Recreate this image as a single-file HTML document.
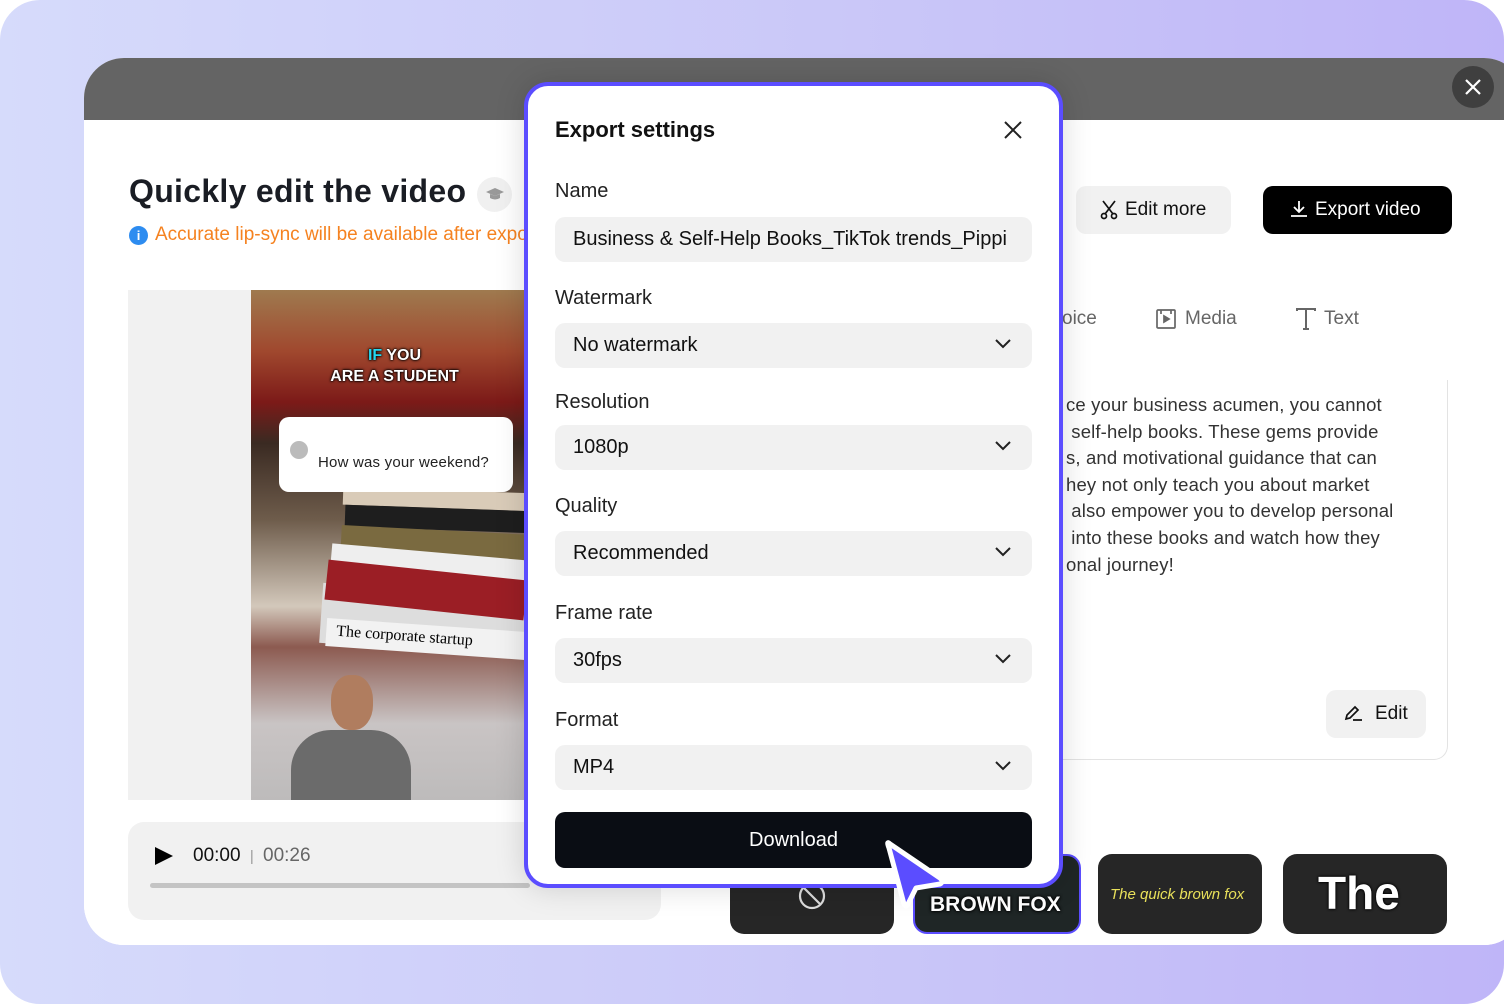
<!DOCTYPE html>
<html><head><meta charset="utf-8"><style>
*{box-sizing:border-box;margin:0;padding:0}
body{width:1504px;height:1004px;background:#fff;font-family:"Liberation Sans",sans-serif;overflow:hidden;position:relative}
.bg{position:absolute;inset:0;border-radius:40px;background:linear-gradient(90deg,#d6dbfb,#c9c6f8 60%,#bfb5f8)}
.win{position:absolute;left:84px;top:58px;width:1440px;height:887px;border-radius:40px;overflow:hidden;background:#fff}
.hdr{position:absolute;left:0;top:0;right:0;height:62px;background:#646464}
.body{position:absolute;left:0;top:62px;right:0;bottom:0;background:#fff;border-radius:20px 20px 0 0}
.abs{position:absolute}
.sel{position:absolute;left:30px;width:477px;height:45px;background:#f1f1f1;border-radius:10px;font-size:20px;color:#111;padding:0 18px;line-height:45px;white-space:nowrap;overflow:hidden}
.sel svg{position:absolute;right:20px;top:15px}
.lbl{position:absolute;left:30px;font-size:20px;color:#222}
.tile{position:absolute;top:854px;height:80px;width:164px;background:#262626;border-radius:14px}
</style></head><body>
<div class="bg"></div>
<div class="win">
 <div class="hdr"></div>
 <div class="body"></div>
</div>
<div class="abs" style="left:1452px;top:66px;width:42px;height:42px;border-radius:50%;background:#3f3f3f"></div>
<svg class="abs" style="left:1463px;top:77px" width="20" height="20"><path d="M3 3L17 17M17 3L3 17" stroke="#fff" stroke-width="2.2"/></svg>

<div class="abs" style="left:129px;top:173px;font-size:32px;font-weight:bold;color:#1a1d24;letter-spacing:0.3px">Quickly edit the video</div>
<div class="abs" style="left:477px;top:177px;width:35px;height:35px;border-radius:50%;background:#f0f0f0"></div>
<svg class="abs" style="left:485px;top:186px" width="20" height="16"><path d="M1 6L10 2L19 6L10 10Z" fill="#999"/><path d="M5 8v4q5 3 10 0V8l-5 2z" fill="#999"/></svg>
<div class="abs" style="left:129px;top:226px;width:19px;height:19px;border-radius:50%;background:#2d8cf0;color:#fff;font-size:13px;font-weight:bold;text-align:center;line-height:19px">i</div>
<div class="abs" style="left:155px;top:224px;font-size:19px;color:#f58220;white-space:nowrap;width:370px;overflow:hidden">Accurate lip-sync will be available after export</div>

<div class="abs" style="left:128px;top:290px;width:400px;height:510px;background:#f1f1f1"></div>
<div class="abs" style="left:251px;top:290px;width:277px;height:510px;overflow:hidden;background:linear-gradient(180deg,#9f7a4f 0%,#a0482e 12%,#7c1a18 22%,#3a2a22 30%,#6e5c4b 45%,#d3c8bb 62%,#8c5a50 70%,#c9c4c4 85%,#bdbbbb 100%)">
 <div class="abs" style="left:92px;top:200px;width:190px;height:18px;background:#d9cbb8;transform:rotate(2deg)"></div>
 <div class="abs" style="left:94px;top:218px;width:190px;height:22px;background:#1e1e1e;transform:rotate(2deg)"></div>
 <div class="abs" style="left:90px;top:240px;width:190px;height:28px;background:#7a6a40;transform:rotate(3deg)"></div>
 <div class="abs" style="left:80px;top:262px;width:200px;height:22px;background:#eee;transform:rotate(5deg)"></div>
 <div class="abs" style="left:70px;top:300px;width:207px;height:60px;background:#ddd;transform:rotate(4deg)"></div>
 <div class="abs" style="left:75px;top:280px;width:200px;height:40px;background:#9b1e25;transform:rotate(6deg)"></div>
 <div class="abs" style="left:75px;top:335px;width:200px;height:28px;background:#f2f2f2;font-size:16px;font-family:'Liberation Serif',serif;padding:4px 10px;transform:rotate(4deg)">The corporate startup</div>
 <div class="abs" style="left:40px;top:440px;width:120px;height:75px;background:#6b6b6b;border-radius:40px 40px 0 0"></div>
 <div class="abs" style="left:80px;top:385px;width:42px;height:55px;background:#b07d5f;border-radius:45%"></div>
 <div class="abs" style="left:5px;top:55px;width:277px;text-align:center;color:#fff;font-weight:bold;font-size:16px;line-height:21px;text-shadow:0 0 3px #000,0 0 2px #000,0 0 1px #000"><span style="color:#25d8f0">IF</span> YOU<br>ARE A STUDENT</div>
</div>
<div class="abs" style="left:279px;top:417px;width:234px;height:75px;background:#fff;border-radius:10px"></div>
<div class="abs" style="left:290px;top:441px;width:18px;height:18px;border-radius:50%;background:#bbb"></div>
<div class="abs" style="left:318px;top:454px;font-size:15px;color:#222;letter-spacing:0.2px">How was your weekend?</div>

<div class="abs" style="left:128px;top:822px;width:533px;height:98px;background:#f1f1f1;border-radius:16px"></div>
<svg class="abs" style="left:154px;top:846px" width="20" height="20"><path d="M1 1L19 10L1 19Z" fill="#000"/></svg>
<div class="abs" style="left:193px;top:845px;font-size:19px;color:#111">00:00 <span style="color:#999;font-size:15px;margin:0 4px">|</span> <span style="color:#666">00:26</span></div>
<div class="abs" style="left:150px;top:883px;width:380px;height:5px;background:#c4c4c4;border-radius:3px"></div>

<div class="abs" style="left:1076px;top:186px;width:155px;height:48px;background:#f1f1f1;border-radius:10px;font-size:19px;color:#111;line-height:48px;padding-left:49px">Edit more</div>
<svg class="abs" style="left:1100px;top:200px" width="18" height="20" fill="none" stroke="#111" stroke-width="1.7"><path d="M3 1L13 14M15 1L5 14"/><circle cx="4" cy="16" r="2.5"/><circle cx="14" cy="16" r="2.5"/></svg>
<div class="abs" style="left:1263px;top:186px;width:189px;height:48px;background:#000;border-radius:10px;font-size:19px;color:#fff;line-height:48px;padding-left:52px">Export video</div>
<svg class="abs" style="left:1290px;top:200px" width="18" height="18" fill="none" stroke="#fff" stroke-width="1.8"><path d="M9 1V12M4 7L9 12L14 7M1 16H17"/></svg>
<div class="abs" style="left:1062px;top:308px;font-size:19px;color:#666">oice</div>
<svg class="abs" style="left:1156px;top:309px" width="20" height="20" fill="none" stroke="#666" stroke-width="1.7"><rect x="1" y="1" width="18" height="18" rx="1"/><path d="M8 7v6l5-3z" fill="#666"/><path d="M5 1v4M15 1v4"/></svg>
<div class="abs" style="left:1185px;top:308px;font-size:19px;color:#666">Media</div>
<svg class="abs" style="left:1295px;top:308px" width="22" height="22" fill="none" stroke="#666" stroke-width="2"><path d="M2 3V1H20V3M11 1V21M8 21H14"/></svg>
<div class="abs" style="left:1324px;top:308px;font-size:19px;color:#666">Text</div>
<div class="abs" style="left:1040px;top:380px;width:408px;height:380px;border:1px solid #e3e3e3;border-top:none;border-radius:0 0 14px 14px"></div>
<div class="abs" style="left:1066px;top:392px;font-size:18.5px;line-height:26.6px;color:#333;white-space:nowrap;letter-spacing:0.15px">ce your business acumen, you cannot<br>&nbsp;self-help books. These gems provide<br>s, and motivational guidance that can<br>hey not only teach you about market<br>&nbsp;also empower you to develop personal<br>&nbsp;into these books and watch how they<br>onal journey!</div>
<div class="abs" style="left:1326px;top:690px;width:100px;height:48px;background:#f1f1f1;border-radius:10px;font-size:19px;color:#111;line-height:48px;padding-left:49px">Edit</div>
<svg class="abs" style="left:1344px;top:704px" width="20" height="18" fill="none" stroke="#111" stroke-width="1.7"><path d="M2 15L3 11L11 3L14 6L6 14Z M9 16H18"/></svg>

<div class="tile" style="left:730px"></div>
<svg class="abs" style="left:798px;top:882px" width="28" height="28" fill="none" stroke="#ddd" stroke-width="2.2"><circle cx="14" cy="14" r="12"/><path d="M6 6L22 22"/></svg>
<div class="tile" style="left:913px;width:168px;border:2px solid #5b4dff;background:#1f2626"></div>
<div class="abs" style="left:930px;top:893px;font-size:21px;font-weight:bold;color:#fff;text-shadow:0 0 3px #000,0 0 3px #000">BROWN FOX</div>
<div class="tile" style="left:1098px"></div>
<div class="abs" style="left:1110px;top:886px;font-size:15px;font-style:italic;color:#e8e05a">The quick brown fox</div>
<div class="tile" style="left:1283px"></div>
<div class="abs" style="left:1318px;top:866px;font-size:46px;font-weight:bold;color:#fff;text-shadow:0 0 3px #000,0 0 2px #000">The</div>

<div class="abs" style="left:524px;top:82px;width:539px;height:806px;border:4px solid #5b4dff;border-radius:24px;background:#fff;box-shadow:0 0 30px rgba(0,0,0,0.15)">
 <div class="abs" style="left:27px;top:31px;font-size:22px;font-weight:bold;color:#111">Export settings</div>
 <svg class="abs" style="left:475px;top:34px" width="20" height="20"><path d="M2 2L18 18M18 2L2 18" stroke="#222" stroke-width="2"/></svg>
 <div class="lbl" style="left:27px;top:94px">Name</div>
 <div class="sel" style="left:27px;top:131px;width:477px">Business &amp; Self-Help Books_TikTok trends_Pippi</div>
 <div class="lbl" style="left:27px;top:201px">Watermark</div>
 <div class="sel" style="left:27px;top:237px">No watermark<svg width="18" height="12"><path d="M2 2L9 9L16 2" fill="none" stroke="#222" stroke-width="2"/></svg></div>
 <div class="lbl" style="left:27px;top:305px">Resolution</div>
 <div class="sel" style="left:27px;top:339px">1080p<svg width="18" height="12"><path d="M2 2L9 9L16 2" fill="none" stroke="#222" stroke-width="2"/></svg></div>
 <div class="lbl" style="left:27px;top:409px">Quality</div>
 <div class="sel" style="left:27px;top:445px">Recommended<svg width="18" height="12"><path d="M2 2L9 9L16 2" fill="none" stroke="#222" stroke-width="2"/></svg></div>
 <div class="lbl" style="left:27px;top:516px">Frame rate</div>
 <div class="sel" style="left:27px;top:552px">30fps<svg width="18" height="12"><path d="M2 2L9 9L16 2" fill="none" stroke="#222" stroke-width="2"/></svg></div>
 <div class="lbl" style="left:27px;top:623px">Format</div>
 <div class="sel" style="left:27px;top:659px">MP4<svg width="18" height="12"><path d="M2 2L9 9L16 2" fill="none" stroke="#222" stroke-width="2"/></svg></div>
 <div class="abs" style="left:27px;top:726px;width:477px;height:56px;background:#0a0d14;border-radius:10px;color:#fff;font-size:20px;text-align:center;line-height:56px">Download</div>
</div>
<svg class="abs" style="left:876px;top:832px" width="76" height="84"><path d="M14 12Q10 8 13 16L28 72Q30 76 32 72L40 56L64 52Q68 50 64 46Z" fill="#5b4dff" stroke="#fff" stroke-width="5" stroke-linejoin="round"/></svg>
</body></html>
